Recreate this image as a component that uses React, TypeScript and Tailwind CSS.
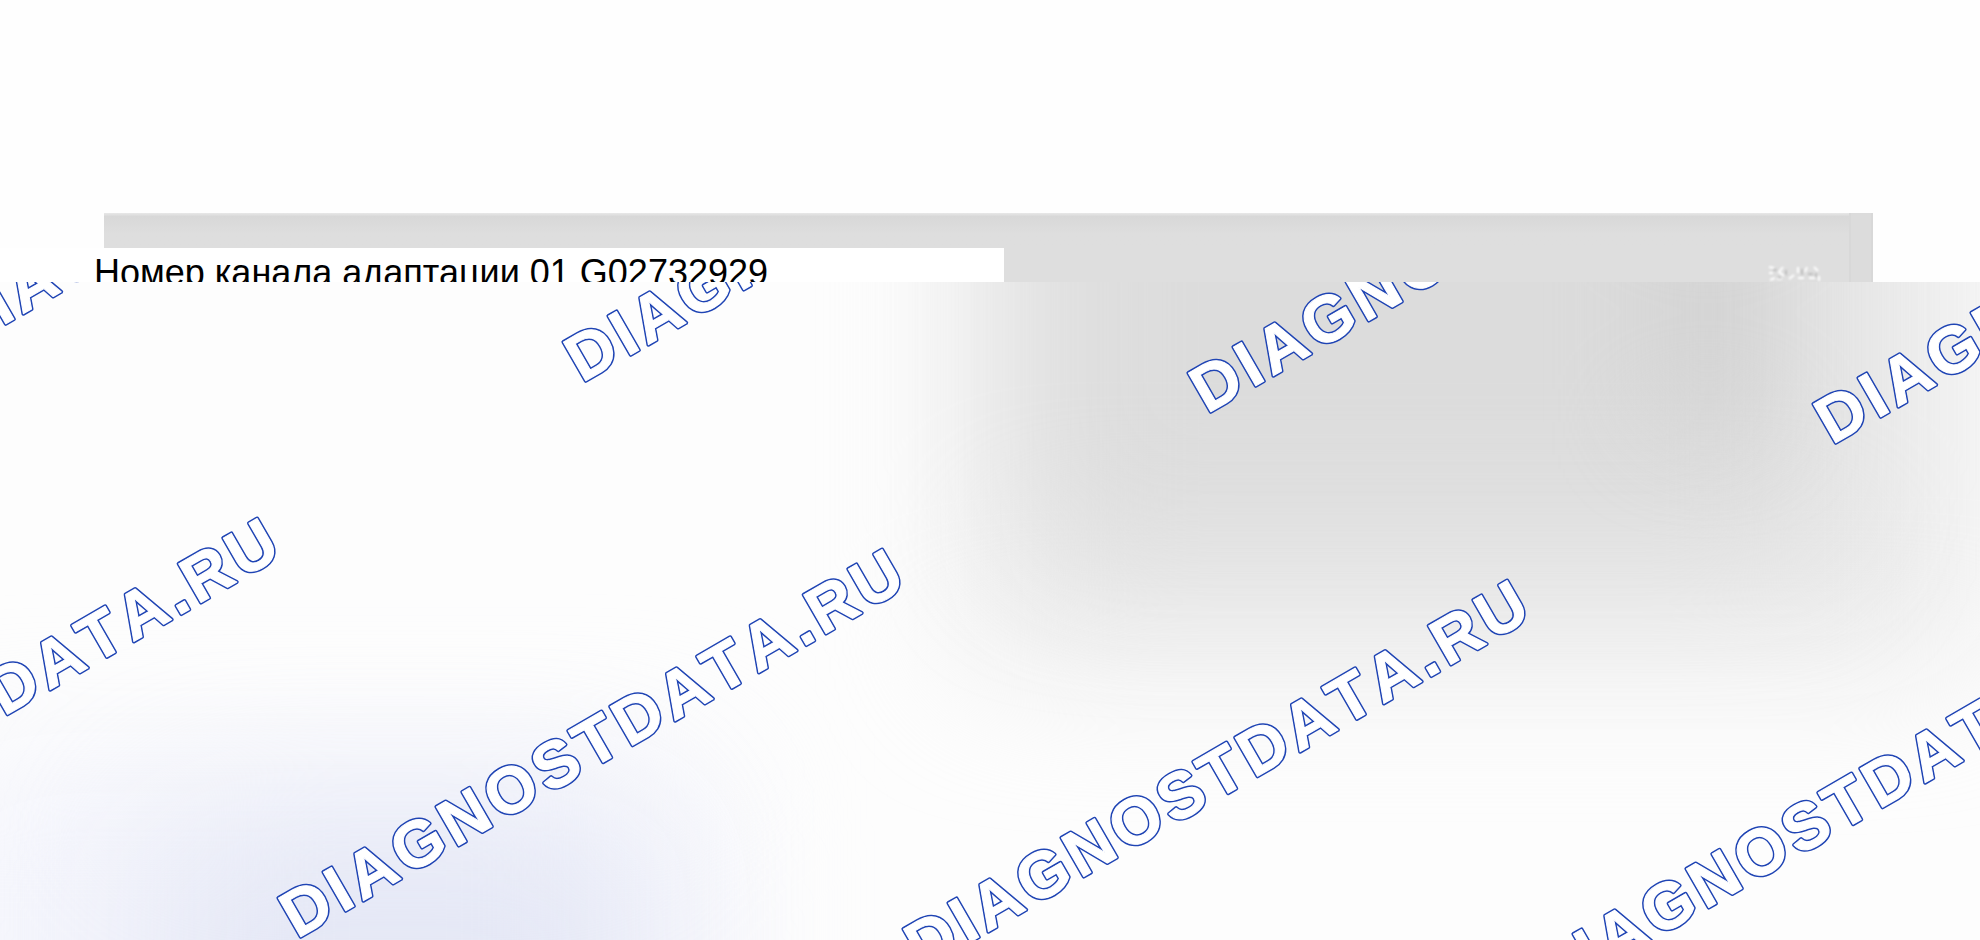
import React from 'react';

const rows = [
    { x: -43, y: 70 },
    { x: 582, y: 101 },
    { x: 1207, y: 132 },
    { x: 1832, y: 163 },
    { x: -328, y: 626 },
    { x: 297, y: 657 },
    { x: 922, y: 688 },
    { x: 1547, y: 719 },
];

function Watermark() {
    return (
        <svg className="absolute inset-x-0 top-0 w-full h-full" aria-hidden="true">
            <defs>
                <text id="mark"
                      transform="rotate(-30)"
                      strokeLinejoin="round"
                      className="text-[65px] font-bold font-['Liberation_Sans',Arial,sans-serif] tracking-[5px] [font-kerning:none]">
                    DIAGNOSTDATA.RU
                </text>
            </defs>
            {/* blue copy sits under the white one and shows as the outline */}
            {rows.map((row) => (
                <g key={`${row.x}-${row.y}`}>
                    <use href="#mark" x={row.x} y={row.y} className="stroke-[#1f44b4]" strokeWidth="4"/>
                    <text transform={`translate(${row.x} ${row.y}) rotate(-30)`}
                          strokeWidth="1"
                          strokeLinejoin="round"
                          className="fill-white stroke-white text-[65px] font-bold font-['Liberation_Sans',Arial,sans-serif] tracking-[5px] [font-kerning:none]">
                        DIAGNOSTDATA.RU
                    </text>
                </g>
            ))}
        </svg>
    )
}

function Specks() {
    return (
        <svg width="54" height="18" viewBox="0 0 54 18" aria-hidden="true" className="blur-[1px]">
            <path fill="none"
                  stroke="#fff"
                  strokeWidth="2"
                  d="M2 3l5 1M2 9h4M3 16l5-2M16 3l-4 5 5 4M10 15h5M22 15l5-4M31 3v6M31 14h6M40 3l-2 5M42 14h6M47 3l4 4M52 12v5"/>
            <path fill="none"
                  stroke="#bdbdbd"
                  strokeWidth="2"
                  d="M6 6h4M11 13l3 1M19 6v5M35 5v6M41 10h5M49 9v4"/>
        </svg>
    )
}

export default function App() {
    return (
        <main className="min-h-screen flex flex-col overflow-hidden bg-white font-['Liberation_Sans',Arial,sans-serif]">
            <header className="h-[282px] flex flex-col justify-end overflow-hidden bg-[#fefefe]">
                <div className="ml-[104px] mr-[107px] h-[35px] flex justify-end bg-linear-to-b from-[#e8e8e8] from-0% via-[#d8d8d8] via-10% to-[#dedede] to-60%">
                    <div className="w-6 border-x-2 border-[#d8d8d8] bg-[#dcdcdc]"/>
                </div>
                <div className="flex h-[34px]">
                    <h1 className="w-[1004px] pl-[94px] pt-[5px] shrink-0 bg-white text-black text-[36px] leading-10 whitespace-nowrap">
                        Номер канала адаптации 01 G02732929
                    </h1>
                    <div className="grow mr-[107px] flex justify-end items-end bg-[#dedede]">
                        <Specks/>
                        <div className="ml-7 w-6 h-full border-x-2 border-[#d8d8d8] bg-[#dcdcdc]"/>
                    </div>
                </div>
            </header>
            <section className="relative grow min-h-[658px] overflow-hidden bg-[#fdfdfd]">
                <div className="absolute left-[49%] right-0 -top-60 h-[625px] rounded-[40px] bg-[#ebebeb] blur-[70px]"/>
                <div className="absolute left-[52%] right-[8%] -top-60 h-[510px] rounded-[40px] bg-[#dcdcdc] blur-[70px]"/>
                <div className="absolute left-[84%] w-[90px] -top-20 h-[220px] bg-[#d1d1d1] blur-[50px]"/>
                <div className="absolute -left-20 w-[800px] top-[480px] h-[400px] rounded-[40px] bg-[#f4f5fc] blur-[70px]"/>
                <div className="absolute left-[8%] w-[480px] top-[540px] h-[340px] rounded-[40px] bg-[#e4e7f5] blur-[80px]"/>
                <Watermark/>
            </section>
        </main>
    )
}
